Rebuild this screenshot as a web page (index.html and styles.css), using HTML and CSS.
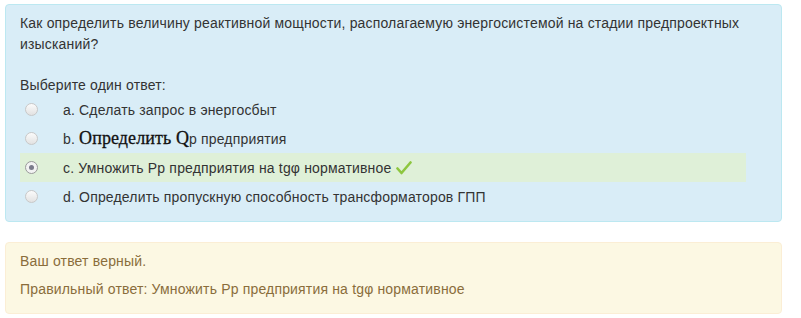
FILE: index.html
```html
<!DOCTYPE html>
<html lang="ru">
<head>
    <meta charset="UTF-8">
    <title>Вопрос</title>
    <link rel="stylesheet" href="styles.css">
</head>
<body>
    <!-- Формулировка вопроса -->
    <div class="formulation">
        <p class="qtext">Как определить величину реактивной мощности, располагаемую энергосистемой на стадии предпроектных изысканий?</p>

        <div class="prompt">Выберите один ответ:</div>
        <div class="answers">
            <div class="answer">
                <span class="radio"></span>
                <span class="label">a. Сделать запрос в энергосбыт</span>
            </div>
            <div class="answer">
                <span class="radio"></span>
                <span class="label">b. <span class="serif">Определить Q</span>р предприятия</span>
            </div>
            <div class="answer correct">
                <span class="radio checked"></span>
                <span class="label">c. Умножить Рр предприятия на tgφ нормативное</span>
                <svg class="tick" width="16" height="14" viewBox="0 0 16 14">
                    <path d="M1.5 7.5 L5.5 12 L14.5 1.5" fill="none" stroke="#8dc63f" stroke-width="2.6" stroke-linecap="round" stroke-linejoin="round"/>
                </svg>
            </div>
            <div class="answer">
                <span class="radio"></span>
                <span class="label">d. Определить пропускную способность трансформаторов ГПП</span>
            </div>
        </div>
    </div>

    <!-- Отзыв -->
    <div class="outcome">
        <p>Ваш ответ верный.</p>
        <p>Правильный ответ: Умножить Рр предприятия на tgφ нормативное</p>
    </div>
</body>
</html>
```

FILE: styles.css
```css
/* Основные стили */
body {
    margin: 0;
    padding: 4px 19px 0 5px;
    background: #ffffff;
    font-family: 'Liberation Sans', Arial, sans-serif;
    font-size: 14px;
    line-height: 20px;
    letter-spacing: 0.17px;
    color: #333333;
}

p {
    margin: 0;
}

/* Блок вопроса */
.formulation {
    background-color: #d9edf7;
    border: 1px solid #bce8f1;
    border-radius: 4px;
    padding: 8px 15px 10px 14px;
}

.qtext {
    line-height: 21px;
    margin-bottom: 20px;
}

.answers {
    margin-right: 20px;
}

.answer {
    display: flex;
    align-items: center;
    height: 29px;
    padding-left: 5px;
}

.answer.correct {
    background-color: #dff0d8;
}

.label {
    margin-left: 25px;
}

.serif {
    font-family: 'Liberation Serif', 'Times New Roman', serif;
    font-size: 18px;
    letter-spacing: 0.1px;
    -webkit-text-stroke: 0.3px #111111;
    color: #111111;
}

/* Радиокнопки */
.radio {
    width: 11px;
    height: 11px;
    border-radius: 50%;
    border: 1px solid #c8c8c8;
    background: linear-gradient(#fbfbfb, #e2e2e2);
    position: relative;
    flex-shrink: 0;
}

.radio.checked {
    border-color: #9a9a9a;
    background: #f2f2f2;
}

.radio.checked::after {
    content: "";
    position: absolute;
    left: 3px;
    top: 3px;
    width: 5px;
    height: 5px;
    border-radius: 50%;
    background: #7a7a8a;
}

.tick {
    margin-left: 5px;
}

/* Блок отзыва */
.outcome {
    margin-top: 20px;
    background-color: #fcf8e3;
    border: 1px solid #fbeed5;
    border-radius: 4px;
    padding: 8px 15px 14px 14px;
    color: #8a6d3b;
}

.outcome p + p {
    margin-top: 8px;
}
```
